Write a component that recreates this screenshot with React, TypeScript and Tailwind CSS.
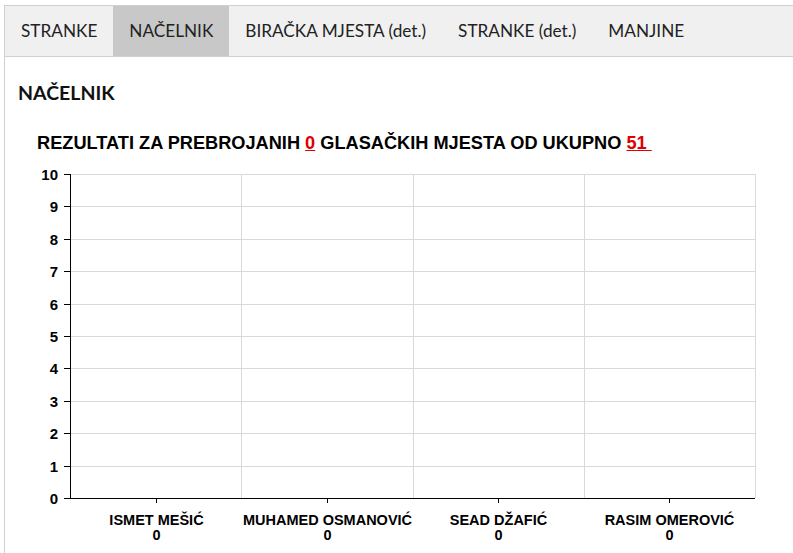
import React from "react";

const tabs = ["STRANKE", "NAČELNIK", "BIRAČKA MJESTA (det.)", "STRANKE (det.)", "MANJINE"];
const cands = ["ISMET MEŠIĆ", "MUHAMED OSMANOVIĆ", "SEAD DŽAFIĆ", "RASIM OMEROVIĆ"];

function Chart() {
  const x0 = 70, x1 = 755, y0 = 174, y1 = 498;
  const step = (y1 - y0) / 10;
  const cw = (x1 - x0) / 4;
  const lines = [];
  for (let i = 0; i <= 10; i++) {
    const y = Math.round(y1 - i * step) + 0.5;
    lines.push(
      <g key={"h" + i}>
        {i > 0 && <line x1={x0} x2={x1} y1={y} y2={y} stroke="#d9d9d9" strokeWidth={1} />}
        <line x1={64} x2={x0} y1={y} y2={y} stroke="#000" strokeWidth={1} />
        <text x={58} y={y + 5.5} textAnchor="end" fontSize={15} fontWeight="bold" fill="#000">
          {i}
        </text>
      </g>
    );
  }
  return (
    <svg
      width={735}
      height={400}
      viewBox="30 150 735 400"
      className="block ml-[25px]"
      style={{ fontFamily: '"Liberation Sans", Arial, sans-serif' }}
    >
      {[1, 2, 3, 4].map((k) => {
        const x = Math.round(x0 + k * cw) + 0.5;
        return <line key={"v" + k} x1={x} x2={x} y1={y0} y2={y1} stroke="#d9d9d9" strokeWidth={1} />;
      })}
      {lines}
      <line x1={x0 + 0.5} x2={x0 + 0.5} y1={y0} y2={y1 + 1} stroke="#000" strokeWidth={1} />
      <line x1={64} x2={x1} y1={y1 + 0.5} y2={y1 + 0.5} stroke="#000" strokeWidth={1} />
      {cands.map((c, k) => {
        const cx = Math.round(x0 + (k + 0.5) * cw) + 0.5;
        return (
          <g key={c}>
            <line x1={cx} x2={cx} y1={y1} y2={y1 + 5} stroke="#000" strokeWidth={1} />
            <text x={cx} y={525} textAnchor="middle" fontSize={14.5} fontWeight="bold" fill="#000">
              {c}
            </text>
            <text x={cx} y={540} textAnchor="middle" fontSize={14.5} fontWeight="bold" fill="#000">
              0
            </text>
          </g>
        );
      })}
    </svg>
  );
}

export default function App() {
  return (
    <div className="w-[793px] h-[553px] bg-white overflow-hidden">
      <div className="ml-[4px] mt-[5px] border-l border-t border-[#d0d0d0] h-[548px]">
        <div className="flex h-[51px] bg-[#f0f0f0] border-b border-[#d0d0d0] text-[17.2px] text-[#222]" style={{ fontFamily: "Lato, sans-serif" }}>
          {tabs.map((t, i) => (
            <div key={t} className={"flex items-center px-[16px] " + (i === 1 ? "bg-[#c8c8c8]" : "")}>
              {t}
            </div>
          ))}
        </div>
        <div className="pl-[13px] pt-[25px] text-[19.5px] leading-[22px] font-bold text-[#111]" style={{ fontFamily: "Lato, sans-serif" }}>
          NAČELNIK
        </div>
        <div
          className="ml-[32px] mt-[29px] text-[18.2px] leading-[20px] font-bold text-black"
          style={{ fontFamily: '"Liberation Sans", Arial, sans-serif' }}
        >
          REZULTATI ZA PREBROJANIH <span className="text-[#e00000] underline">0</span> GLASAČKIH MJESTA OD UKUPNO{" "}
          <span className="text-[#e00000] underline">51&nbsp;</span>
        </div>
        <div className="-mt-[3px]">
          <Chart />
        </div>
      </div>
    </div>
  );
}
